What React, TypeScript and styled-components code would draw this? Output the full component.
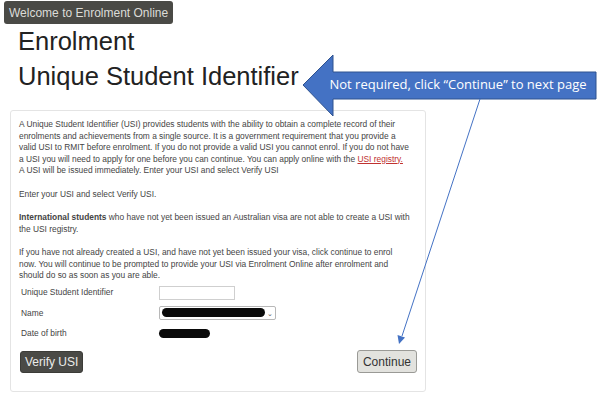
import styled, { createGlobalStyle } from "styled-components";

const GlobalStyle = createGlobalStyle`
  html, body {
    margin: 0;
    padding: 0;
    background: #ffffff;
  }
  body {
    font-family: "Liberation Sans", Arial, sans-serif;
    color: #333;
  }
`;

const Page = styled.div`
  position: relative;
  width: 602px;
  height: 399px;
  overflow: hidden;
`;

const Badge = styled.div`
  display: inline-flex;
  align-items: center;
  height: 23px;
  margin: 1px 0 0 4px;
  padding: 0 5px;
  border-radius: 3px;
  background: #4a4a46;
  color: #dcdcd8;
  font-size: 12px;
`;

const Title = styled.h1`
  margin: 0 0 0 18px;
  font-weight: normal;
  font-size: 25.5px;
  line-height: 35px;
  color: #222;
`;

const Card = styled.div`
  margin: 16px 0 0 10px;
  width: 398px;
  height: 272px;
  padding: 8px 8px 0 8px;
  border: 1px solid #e4e4e4;
  border-radius: 3px;
  font-size: 8.4px;
  line-height: 11.5px;
  color: #444;
`;

const Copy = styled.div`
  display: flex;
  flex-direction: column;
  gap: 12px;
`;

const Para = styled.p`
  margin: 0;
  white-space: nowrap;
`;

const RegistryLink = styled.a`
  color: #c0312f;
  text-decoration: underline;
`;

const Form = styled.div`
  display: grid;
  grid-template-columns: 138px auto;
  grid-auto-rows: 20.5px;
  align-items: center;
  margin: 1px 0 0 2px;
`;

const Label = styled.span`
  font-size: 8.4px;
  color: #444;
`;

const TextInput = styled.div`
  width: 74px;
  height: 12px;
  border: 1px solid #cfcfcf;
  background: #fff;
`;

const SelectBox = styled.div`
  position: relative;
  display: flex;
  align-items: center;
  justify-content: flex-end;
  width: 113px;
  height: 12px;
  padding-right: 2px;
  border: 1px solid #b8b8b8;
  border-radius: 2px;
  background: #fff;
  color: #555;
  font-size: 7px;
`;

const Redaction = styled.span<{ $w: number }>`
  display: block;
  width: ${(p) => p.$w}px;
  height: 9px;
  border-radius: 5px;
  background: #0a0a0a;
`;

const SelectRedaction = styled(Redaction)`
  position: absolute;
  left: 2px;
  top: 1px;
`;

const Actions = styled.div`
  display: flex;
  justify-content: space-between;
  align-items: center;
  margin: 6px 0 0 1px;
`;

const Button = styled.button<{ $dark?: boolean }>`
  height: ${(p) => (p.$dark ? "22px" : "23px")};
  padding: 0 ${(p) => (p.$dark ? "4px" : "5px")};
  border-radius: 3px;
  font-family: "Liberation Sans", Arial, sans-serif;
  font-size: 12px;
  border: 1px solid ${(p) => (p.$dark ? "#3c3c38" : "#9a9a96")};
  background: ${(p) => (p.$dark ? "#4a4a46" : "#e2e2de")};
  color: ${(p) => (p.$dark ? "#ececea" : "#333")};
`;

const Callout = styled.svg`
  position: absolute;
  left: 0;
  top: 0;
  pointer-events: none;
`;

export default function App() {
  return (
    <>
      <GlobalStyle />
      <Page>
        <Badge>Welcome to Enrolment Online</Badge>
        <Title>
          Enrolment
          <br />
          Unique Student Identifier
        </Title>
        <Card>
          <Copy>
            <Para>
              A Unique Student Identifier (USI) provides students with the ability to obtain a complete record of their
              <br />
              enrolments and achievements from a single source. It is a government requirement that you provide a
              <br />
              valid USI to RMIT before enrolment. If you do not provide a valid USI you cannot enrol. If you do not have
              <br />
              a USI you will need to apply for one before you can continue. You can apply online with the{" "}
              <RegistryLink>USI registry.</RegistryLink>
              <br />
              A USI will be issued immediately. Enter your USI and select Verify USI
            </Para>
            <Para>Enter your USI and select Verify USI.</Para>
            <Para>
              <b>International students</b> who have not yet been issued an Australian visa are not able to create a USI with
              <br />
              the USI registry.
            </Para>
            <Para>
              If you have not already created a USI, and have not yet been issued your visa, click continue to enrol
              <br />
              now. You will continue to be prompted to provide your USI via Enrolment Online after enrolment and
              <br />
              should do so as soon as you are able.
            </Para>
          </Copy>
          <Form>
            <Label>Unique Student Identifier</Label>
            <TextInput />
            <Label>Name</Label>
            <SelectBox>
              <SelectRedaction $w={103} />
              ⌄
            </SelectBox>
            <Label>Date of birth</Label>
            <Redaction $w={51} />
          </Form>
          <Actions>
            <Button $dark>Verify USI</Button>
            <Button>Continue</Button>
          </Actions>
        </Card>
        <Callout width="602" height="399" viewBox="0 0 602 399">
          <path
            d="M303 85 L333 55 L333 72 L596 72 L596 99 L333 99 L333 116 Z"
            fill="#4472c4"
            stroke="#2f528f"
            strokeWidth="1"
          />
          <text
            x="458"
            y="89"
            textAnchor="middle"
            fill="#ffffff"
            fontFamily="'Open Sans', 'Noto Sans', sans-serif"
            fontSize="13"
          >
            Not required, click “Continue” to next page
          </text>
          <line x1="480" y1="99" x2="402" y2="336" stroke="#4472c4" strokeWidth="1" />
          <path d="M399 344 L397.5 335 L405 337.5 Z" fill="#4472c4" />
        </Callout>
      </Page>
    </>
  );
}
